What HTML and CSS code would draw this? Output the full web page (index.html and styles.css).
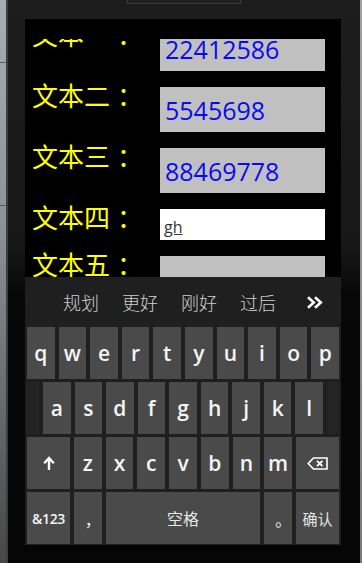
FILE: index.html
```html
<!DOCTYPE html>
<html lang="zh-CN">
<head>
<meta charset="utf-8">
<title>文本</title>
<link rel="stylesheet" href="styles.css">
</head>
<body>
<div class="desk">
  <div class="strip-left"></div>
  <div class="phone">
    <div class="phone-top"><div class="notch"></div></div>
    <div class="phone-mid">
      <div class="screen">
        <div class="screen-gap"></div>
        <div class="viewport">
          <div class="form">
            <div class="row">
              <span class="label">文本一<span class="colon">：</span></span>
              <div class="box"><span class="val">22412586</span></div>
            </div>
            <div class="row">
              <span class="label">文本二<span class="colon">：</span></span>
              <div class="box"><span class="val">5545698</span></div>
            </div>
            <div class="row">
              <span class="label">文本三<span class="colon">：</span></span>
              <div class="box"><span class="val">88469778</span></div>
            </div>
            <div class="row">
              <span class="label">文本四<span class="colon">：</span></span>
              <div class="box box-focus"><span class="typed">gh</span></div>
            </div>
            <div class="row">
              <span class="label">文本五<span class="colon">：</span></span>
              <div class="box"></div>
            </div>
          </div>
        </div>
        <div class="keyboard">
          <div class="suggest">
            <span class="cand">规划</span>
            <span class="cand">更好</span>
            <span class="cand">刚好</span>
            <span class="cand">过后</span>
            <span class="more">
              <svg width="17" height="13" viewBox="0 0 17 13"><path d="M2 1.2 L7.8 6.5 L2 11.8 M9 1.2 L14.8 6.5 L9 11.8" fill="none" stroke="#fff" stroke-width="2.6"/></svg>
            </span>
          </div>
          <div class="keys">
            <div class="krow r1">
              <div class="key">q</div><div class="key">w</div><div class="key">e</div><div class="key">r</div><div class="key">t</div><div class="key">y</div><div class="key">u</div><div class="key">i</div><div class="key">o</div><div class="key">p</div>
            </div>
            <div class="krow r2">
              <div class="side"></div>
              <div class="key">a</div><div class="key">s</div><div class="key">d</div><div class="key">f</div><div class="key">g</div><div class="key">h</div><div class="key">j</div><div class="key">k</div><div class="key">l</div>
              <div class="side"></div>
            </div>
            <div class="krow r3">
              <div class="key"><svg width="12" height="14" viewBox="0 0 12 14"><path d="M6 14 V2.5 M1.2 7.2 L6 2 L10.8 7.2" fill="none" stroke="#fff" stroke-width="2.4"/></svg></div>
              <div class="key">z</div><div class="key">x</div><div class="key">c</div><div class="key">v</div><div class="key">b</div><div class="key">n</div><div class="key">m</div>
              <div class="key"><svg width="21" height="13" viewBox="0 0 21 13"><path d="M6.5 1 H20 V12 H6.5 L1.2 6.5 Z" fill="none" stroke="#fff" stroke-width="1.6"/><path d="M10 3.8 L15.4 9.2 M15.4 3.8 L10 9.2" fill="none" stroke="#fff" stroke-width="1.8"/></svg></div>
            </div>
            <div class="krow r4">
              <div class="key key-sym">&amp;123</div>
              <div class="key key-punct">，</div>
              <div class="key key-space">空格</div>
              <div class="key key-punct">。</div>
              <div class="key key-ok">确认</div>
            </div>
          </div>
        </div>
      </div>
    </div>
    <div class="phone-bottom"></div>
  </div>
  <div class="strip-right"></div>
</div>
</body>
</html>
```

FILE: styles.css
```css
html, body {
  margin: 0;
  padding: 0;
  background: #050505;
}

.desk {
  display: flex;
  width: 362px;
  height: 563px;
  overflow: hidden;
}

.strip-left {
  width: 6px;
  flex: none;
  border-right: 2px solid #3c3f42;
  background:
    linear-gradient(to bottom, transparent 62px, #585c60 62px, #585c60 63px, transparent 63px),
    linear-gradient(to bottom, transparent 205px, #585c60 205px, #585c60 206px, transparent 206px),
    linear-gradient(to bottom, #a8aeb5 0%, #8d9298 40%, #6a6c6e 70%, #474747 100%);
}

.strip-right {
  width: 2px;
  flex: none;
  background: linear-gradient(to bottom, #9da1a5, #7a7a7a);
}

.phone {
  width: 352px;
  flex: none;
  display: flex;
  flex-direction: column;
  background: linear-gradient(to bottom, #1d1d1d 0%, #171717 44%, #080808 52%, #050505 100%);
}

.phone-top {
  height: 19px;
  display: flex;
  justify-content: center;
}

.notch {
  width: 112px;
  height: 3px;
  background: #202020;
  border: 1px solid #3a3a3a;
  border-top: none;
}

.phone-mid {
  display: flex;
  padding-left: 17px;
  padding-right: 19px;
}

.phone-bottom {
  height: 18px;
}

.screen {
  width: 316px;
  height: 526px;
  display: flex;
  flex-direction: column;
  background: #000;
}

.screen-gap {
  height: 20px;
  flex: none;
}

.viewport {
  height: 238px;
  flex: none;
  overflow: hidden;
}

.form {
  margin-top: -13px;
  display: flex;
  flex-direction: column;
  gap: 16px;
}

.row {
  display: flex;
  align-items: flex-start;
}

.label {
  width: 135px;
  flex: none;
  box-sizing: border-box;
  padding-left: 7px;
  margin-top: -5px;
  font-family: "Noto Sans CJK SC", sans-serif;
  font-size: 26px;
  line-height: 26px;
  color: #ffff00;
  white-space: nowrap;
}

.colon {
  margin-left: 7px;
}

.box {
  width: 165px;
  height: 45px;
  flex: none;
  box-sizing: border-box;
  padding-left: 5px;
  display: flex;
  align-items: center;
  background: #c0c0c0;
}

.val {
  font-family: "Open Sans", "Noto Sans", sans-serif;
  font-size: 25px;
  color: #0a0af0;
}

.box-focus {
  height: 31px;
  background: #fff;
  padding-left: 4px;
  padding-top: 4px;
}

.typed {
  font-family: "Open Sans", "Noto Sans", sans-serif;
  font-size: 16px;
  color: #333;
  text-decoration: underline;
}

.keyboard {
  height: 268px;
  flex: none;
  background: #1f1f1f;
  display: flex;
  flex-direction: column;
}

.suggest {
  height: 50px;
  flex: none;
  display: flex;
  align-items: center;
  padding-left: 38px;
  gap: 23px;
}

.cand {
  font-family: "Noto Sans CJK SC", sans-serif;
  font-weight: 300;
  font-size: 18px;
  color: #cfcfcf;
}

.more {
  margin-left: 7px;
  display: flex;
}

.keys {
  display: flex;
  flex-direction: column;
  gap: 3px;
  padding: 0 2px;
}

.krow {
  display: grid;
  height: 52px;
  gap: 4px;
}

.r1 {
  grid-template-columns: repeat(10, 1fr);
}

.r2 {
  grid-template-columns: 12px repeat(9, 1fr) 12px;
}

.r3 {
  grid-template-columns: 43px repeat(7, 1fr) 43px;
}

.r4 {
  grid-template-columns: 43px 27.6px 1fr 27.6px 43px;
}

.side {
  background: #242424;
}

.key {
  background: #4a4a4a;
  display: flex;
  align-items: center;
  justify-content: center;
  font-family: "Open Sans", "Noto Sans", sans-serif;
  font-weight: 600;
  font-size: 21px;
  color: #f4f4f4;
}

.key-sym {
  font-size: 14px;
  letter-spacing: -0.3px;
}

.key-punct {
  font-family: "Noto Sans CJK SC", sans-serif;
  font-weight: 400;
  font-size: 16px;
  padding-left: 10px;
  padding-top: 2px;
}

.key-space {
  font-family: "Noto Sans CJK SC", sans-serif;
  font-weight: 400;
  font-size: 16px;
  color: #e6e6e6;
}

.key-ok {
  font-family: "Noto Sans CJK SC", sans-serif;
  font-weight: 400;
  font-size: 15px;
  color: #e6e6e6;
}
```
